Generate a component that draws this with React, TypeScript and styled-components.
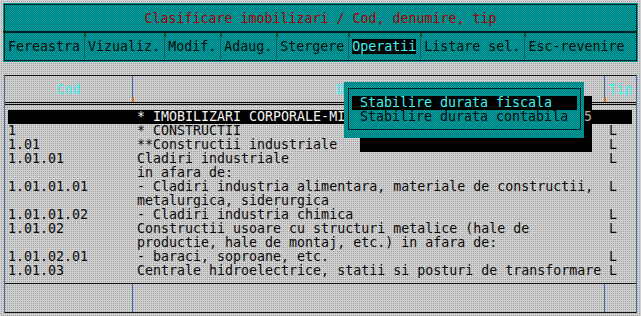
import React from "react";
import styled, { createGlobalStyle } from "styled-components";

const GlobalStyle = createGlobalStyle`
  html, body {
    margin: 0;
    padding: 0;
  }
  body {
    font-family: "DejaVu Sans Mono", "Liberation Mono", monospace;
    font-size: 13.3px;
    color: #0a0a0a;
  }
`;

const grayDots = `conic-gradient(from 90deg at 1px 1px, #a0a0a0 0 25%, #d0d0d0 0) 0 0 / 2px 2px`;
const tealDither = `repeating-conic-gradient(#007878 0 25%, #00a4a4 0 50%) 0 0 / 2px 2px`;

const menuItems = [
  "Fereastra",
  "Vizualiz.",
  "Modif.",
  "Adaug.",
  "Stergere",
  "Operatii",
  "Listare sel.",
  "Esc-revenire",
];

interface Row {
  cod: string;
  den: string;
  tip: string;
  selected?: boolean;
}

const rows: Row[] = [
  { cod: "", den: "* IMOBILIZARI CORPORALE-MIJLOACE FIXE", tip: "", selected: true },
  { cod: "1", den: "* CONSTRUCTII", tip: "L" },
  { cod: "1.01", den: "**Constructii industriale", tip: "L" },
  { cod: "1.01.01", den: "Cladiri industriale", tip: "L" },
  { cod: "", den: "in afara de:", tip: "" },
  { cod: "1.01.01.01", den: "- Cladiri industria alimentara, materiale de constructii,", tip: "L" },
  { cod: "", den: "metalurgica, siderurgica", tip: "" },
  { cod: "1.01.01.02", den: "- Cladiri industria chimica", tip: "L" },
  { cod: "1.01.02", den: "Constructii usoare cu structuri metalice (hale de", tip: "L" },
  { cod: "", den: "productie, hale de montaj, etc.) in afara de:", tip: "" },
  { cod: "1.01.02.01", den: "- baraci, soproane, etc.", tip: "L" },
  { cod: "1.01.03", den: "Centrale hidroelectrice, statii si posturi de transformare", tip: "L" },
];

export default function App() {
  return (
    <Screen>
      <GlobalStyle />
      <TopPanel>
        <TopFrame>
          <TitleBar>Clasificare imobilizari / Cod, denumire, tip</TitleBar>
          <Divider />
          <MenuBar>
            {menuItems.map((m, i) => (
              <MenuItem key={m} first={i === 0}>
                <MenuLabel active={m === "Operatii"}>{m}</MenuLabel>
              </MenuItem>
            ))}
          </MenuBar>
        </TopFrame>
      </TopPanel>

      <ListPanel>
        <HeaderRow>
          <HeadCell sep>Cod</HeadCell>
          <HeadCell sep>Denumire</HeadCell>
          <HeadCell>Tip</HeadCell>
        </HeaderRow>
        <DataArea>
          {rows.map((r, i) => (
            <DataRow key={i} selected={r.selected}>
              <CodCell>{r.cod}</CodCell>
              <DenCell>{r.den}</DenCell>
              <TipCell>{r.tip}</TipCell>
            </DataRow>
          ))}
        </DataArea>
        <FooterRow>
          <FootCell sep />
          <FootCell sep />
          <FootCell />
        </FooterRow>
      </ListPanel>

      <PopupShadow>
        <ShadowText>5</ShadowText>
      </PopupShadow>
      <Popup>
        <PopupFrame>
          <PopupItem active>Stabilire durata fiscala</PopupItem>
          <PopupItem>Stabilire durata contabila</PopupItem>
        </PopupFrame>
      </Popup>
    </Screen>
  );
}

const Screen = styled.div`
  position: relative;
  width: 641px;
  height: 316px;
  box-sizing: border-box;
  padding: 3px 3px 0 3px;
  background: ${grayDots};
  display: flex;
  flex-direction: column;
  gap: 13px;
  overflow: hidden;
`;

const TopPanel = styled.div`
  height: 59px;
  box-sizing: border-box;
  padding: 1px 1px 1px 1px;
  background: ${tealDither};
  display: flex;
`;

const TopFrame = styled.div`
  flex: 1;
  border: 1px solid #052626;
  display: flex;
  flex-direction: column;
`;

const TitleBar = styled.div`
  height: 26px;
  display: flex;
  align-items: center;
  justify-content: center;
  color: #a40000;
  white-space: pre;
`;

const Divider = styled.div`
  height: 2px;
  margin-left: -2px;
  background: #041c1c;
`;

const MenuBar = styled.div`
  flex: 1;
  display: flex;
  align-items: stretch;
`;

const MenuItem = styled.div<{ first?: boolean }>`
  position: relative;
  display: flex;
  align-items: center;
  padding: 0 4px 0 3px;
  border-left: ${(p) => (p.first ? "none" : "1px solid #1d5670")};
  white-space: pre;

  &::before {
    content: "";
    display: ${(p) => (p.first ? "none" : "block")};
    position: absolute;
    left: -1px;
    top: 0;
    width: 2px;
    height: 4px;
    background: #1d4a22;
  }
`;

const MenuLabel = styled.span<{ active?: boolean }>`
  line-height: 15px;
  background: ${(p) => (p.active ? "#000" : "transparent")};
  color: ${(p) => (p.active ? "#3ef4f4" : "#0a0a0a")};
`;

const ListPanel = styled.div`
  margin: 0 1px;
  height: 238px;
  box-sizing: border-box;
  border-top: 1px solid #101010;
  border-bottom: 1px solid #101010;
  border-left: 1px solid #4a6ea0;
  border-right: 1px solid #3a72c0;
  display: flex;
  flex-direction: column;
`;

const HeaderRow = styled.div`
  height: 26px;
  display: grid;
  grid-template-columns: 128px 472px 1fr;
  border-bottom: 3px double #0a0a0a;
`;

const HeadCell = styled.div<{ sep?: boolean }>`
  position: relative;
  display: flex;
  align-items: center;
  justify-content: center;
  color: #40f0f0;
  border-right: ${(p) => (p.sep ? "1px solid #3a72c0" : "none")};

  &::after {
    content: "";
    display: ${(p) => (p.sep ? "block" : "none")};
    position: absolute;
    right: -2px;
    bottom: 0;
    width: 2px;
    height: 5px;
    background: #c87028;
  }
`;

const DataArea = styled.div`
  flex: 1;
  padding: 5px 4px 5px 3px;
  display: flex;
  flex-direction: column;
`;

const DataRow = styled.div<{ selected?: boolean }>`
  height: 14px;
  line-height: 14px;
  display: grid;
  grid-template-columns: 125px 472px 1fr;
  white-space: pre;
  background: ${(p) => (p.selected ? "#000" : "transparent")};
  color: ${(p) => (p.selected ? "#f4f4f4" : "#0a0a0a")};
`;

const CodCell = styled.span``;

const DenCell = styled.span`
  padding-left: 4px;
`;

const TipCell = styled.span`
  padding-left: 4px;
`;

const FooterRow = styled.div`
  height: 28px;
  display: grid;
  grid-template-columns: 128px 472px 1fr;
  border-top: 1px solid #101010;
`;

const FootCell = styled.div<{ sep?: boolean }>`
  border-right: ${(p) => (p.sep ? "1px solid #3a72c0" : "none")};
`;

const PopupShadow = styled.div`
  position: absolute;
  left: 360px;
  top: 96px;
  width: 232px;
  height: 56px;
  box-sizing: border-box;
  padding-top: 14px;
  background: #000;
  display: flex;
  justify-content: flex-end;
  align-items: flex-start;
`;

const ShadowText = styled.span`
  line-height: 14px;
  color: #b8b0a0;
`;

const Popup = styled.div`
  position: absolute;
  left: 344px;
  top: 82px;
  width: 240px;
  height: 56px;
  box-sizing: border-box;
  padding: 6px 3px 8px 4px;
  background: ${tealDither};
  display: flex;
`;

const PopupFrame = styled.div`
  flex: 1;
  border: 1px solid #052626;
  padding: 7px 3px 5px 3px;
  display: flex;
  flex-direction: column;
`;

const PopupItem = styled.div<{ active?: boolean }>`
  height: 14px;
  line-height: 14px;
  padding-left: 8px;
  white-space: pre;
  background: ${(p) => (p.active ? "#000" : "transparent")};
  color: ${(p) => (p.active ? "#3ef4f4" : "#0a0a0a")};
`;
